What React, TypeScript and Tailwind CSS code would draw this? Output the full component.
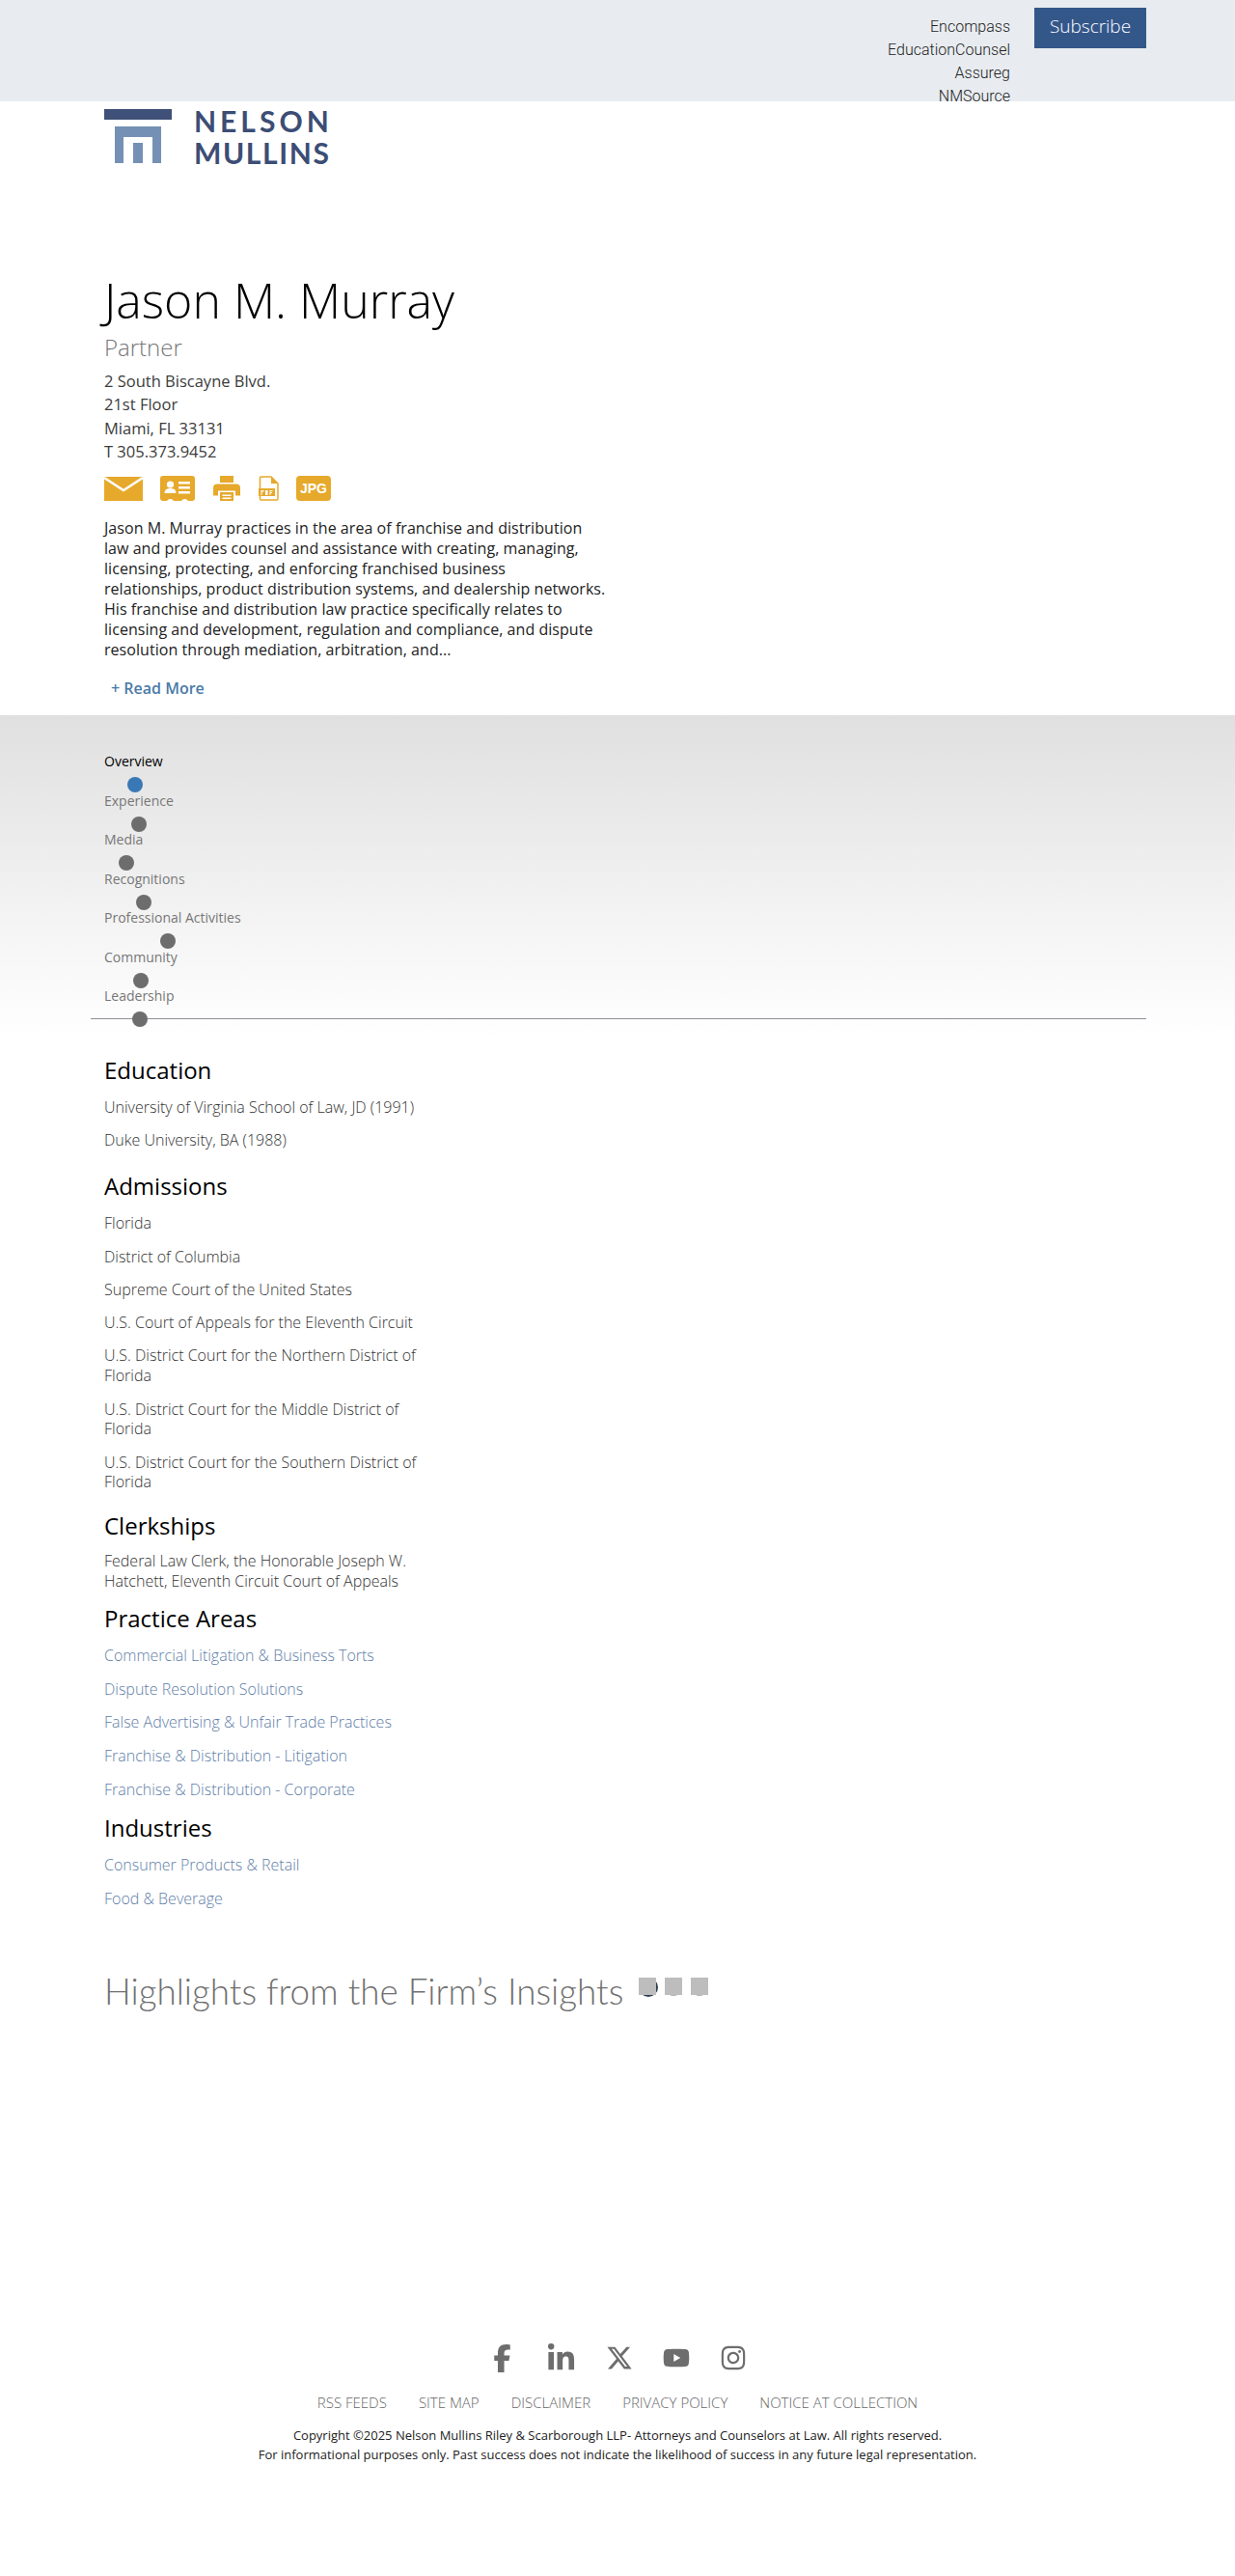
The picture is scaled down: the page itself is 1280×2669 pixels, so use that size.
import { FaFacebookF, FaInstagram, FaLinkedinIn, FaYoutube, FaXTwitter } from "react-icons/fa6";

const sans = "font-['Open_Sans',sans-serif]";

const tabs = [
  { label: "Overview", dot: 32, active: true },
  { label: "Experience", dot: 36 },
  { label: "Media", dot: 23 },
  { label: "Recognitions", dot: 41 },
  { label: "Professional Activities", dot: 66 },
  { label: "Community", dot: 38 },
  { label: "Leadership", dot: 37 },
];

const bioLines = [
  "Jason M. Murray practices in the area of franchise and distribution",
  "law and provides counsel and assistance with creating, managing,",
  "licensing, protecting, and enforcing franchised business",
  "relationships, product distribution systems, and dealership networks.",
  "His franchise and distribution law practice specifically relates to",
  "licensing and development, regulation and compliance, and dispute",
  "resolution through mediation, arbitration, and...",
];

const admissions = [
  "Florida",
  "District of Columbia",
  "Supreme Court of the United States",
  "U.S. Court of Appeals for the Eleventh Circuit",
  "U.S. District Court for the Northern District of Florida",
  "U.S. District Court for the Middle District of Florida",
  "U.S. District Court for the Southern District of Florida",
];

const practices = [
  "Commercial Litigation & Business Torts",
  "Dispute Resolution Solutions",
  "False Advertising & Unfair Trade Practices",
  "Franchise & Distribution - Litigation",
  "Franchise & Distribution - Corporate",
];

function Item({ children, link }: { children: string; link?: boolean }) {
  return (
    <p className={`text-base leading-[20.8px] font-light ${link ? "mb-[14px] text-[#5f7ea8]" : "mb-[13.5px] text-[#333333]"}`}>
      {children}
    </p>
  );
}

function Heading({ children }: { children: string }) {
  return <h2 className="mb-[14px] text-2xl leading-[29px] font-normal text-black">{children}</h2>;
}

function ActionIcons() {
  return (
    <div className="mt-[13px] flex items-center h-[26px] text-[#e6a92b]">
      <svg width="40" height="25" viewBox="0 0 40 25" className="mr-[18px]">
        <rect width="40" height="25" fill="currentColor" />
        <path d="M0 1l20 13L40 1" fill="none" stroke="#fff" strokeWidth="2.500" />
      </svg>
      <svg width="36" height="26" viewBox="0 0 36 26" className="mr-[19px]">
        <path d="M3 0h30a3 3 0 0 1 3 3v20a3 3 0 0 1-3 3h-4a4 4 0 0 0-7 0H14a4 4 0 0 0-7 0H3a3 3 0 0 1-3-3V3a3 3 0 0 1 3-3z" fill="currentColor" />
        <circle cx="10.500" cy="9" r="3.600" fill="#fff" />
        <path d="M4.500 18c0-4 3-5 6-5s6 1 6 5z" fill="#fff" />
        <path d="M19 6h12v2.500H19zM19 11h12v2.500H19zM19 16h12v2.500H19z" fill="#fff" />
      </svg>
      <svg width="28" height="26" viewBox="0 0 28 26" className="mr-[19px]">
        <path d="M7 0h14v7H7z" fill="currentColor" />
        <path d="M4 8.500h20a4 4 0 0 1 4 4v8h-5v-5H5v5H0v-8a4 4 0 0 1 4-4z" fill="currentColor" />
        <path d="M7 17h14v9H7z" fill="currentColor" />
        <path d="M9.500 19.500h9v1.500h-9zM9.500 22.500h9v1.500h-9z" fill="#fff" />
      </svg>
      <svg width="21" height="26" viewBox="0 0 21 26" className="mr-[18px]">
        <path d="M2.500 1H13l7 7v16a1 1 0 0 1-1 1H2.500a1 1 0 0 1-1-1V2a1 1 0 0 1 1-1z" fill="none" stroke="currentColor" strokeWidth="1.500" />
        <path d="M13 1v7h7z" fill="currentColor" />
        <rect x="0" y="13" width="17" height="8" fill="currentColor" />
        <path d="M2.500 15h3v1.500h-2V20h-1zM7 15h2.500v5H7zM11.500 15h3v1h-2v1h1.500v1h-1.500v2h-1z" fill="#fff" />
      </svg>
      <div className="flex h-[26px] w-[36px] items-center justify-center rounded-[4px] bg-[#e6a92b] text-[14px] font-bold leading-none text-white font-['Liberation_Sans',sans-serif]">
        JPG
      </div>
    </div>
  );
}

export default function App() {
  return (
    <div className={`${sans} relative min-h-[2669px] bg-white text-black`}>
      {/* Top bar */}
      <div className="h-[105px] overflow-hidden bg-[#e8ecf0]">
        <div className="mx-auto flex w-[1096px] justify-end">
          <ul className="mr-[25px] pt-[16px] text-right text-base leading-6 font-light text-[#222222] font-['Roboto',sans-serif]">
            <li>Encompass</li>
            <li>EducationCounsel</li>
            <li>Assureg</li>
            <li>NMSource</li>
          </ul>
          <button className="mt-2 h-[42px] w-[116px] bg-[#34578a] pb-[3px] text-[19px] font-light text-white">Subscribe</button>
        </div>
      </div>

      {/* Logo */}
      <div className="flex pl-[108px] pt-[8px]">
        <svg width="70" height="56" viewBox="0 0 70 56" className="shrink-0">
          <rect x="0" y="0" width="70" height="11" fill="#3f5178" />
          <path d="M11 18h48v38H50V29H20v27h-9z" fill="#7590b5" />
          <rect x="30" y="35" width="10" height="21" fill="#7590b5" />
        </svg>
        <div className="ml-[23px] -mt-[4px] h-[56px] font-['Lato',sans-serif] text-[30px] leading-[33px] font-bold text-[#3c4d75]">
          <div className="tracking-[4px]">NELSON</div>
          <div className="tracking-[1.6px]">MULLINS</div>
        </div>
      </div>

      {/* Bio */}
      <div className="pl-[108px] pt-[113px]">
        <h1 className="text-[50px] leading-[58px] font-light text-black">Jason M. Murray</h1>
        <div className="mt-[5px] text-2xl leading-[29px] font-light text-[#777777]">Partner</div>
        <div className="mt-[9px] text-[16.5px] leading-[24.3px] font-medium text-[#3c3c3c]">
          <div>2 South Biscayne Blvd.</div>
          <div>21st Floor</div>
          <div>Miami, FL 33131</div>
          <div>T 305.373.9452</div>
        </div>
        <ActionIcons />
        <p className="mt-[18px] whitespace-nowrap text-base leading-[21px] tracking-[0.05px] text-[#222222]">
          {bioLines.map((line) => (
            <span key={line} className="block">
              {line}
            </span>
          ))}
        </p>
        <a className="mt-[18px] ml-[7px] block text-base leading-[22px] font-semibold text-[#4a7aa8]">+ Read More</a>
      </div>

      {/* Tabs */}
      <div className="mt-[17px] h-[335px] bg-gradient-to-b from-[#e0e0e0] to-white">
        <div className="relative ml-[94px] h-[315px] w-[1094px] border-b border-[#8f8f99] pl-[14px] pt-[38px]">
          {tabs.map((t) => (
            <div key={t.label} className="relative h-[40.500px]">
              <span className={`text-sm leading-[20px] block ${t.active ? "text-black" : "text-[#777777]"}`}>{t.label}</span>
              <span
                className={`absolute top-[26px] h-[16px] w-[16px] rounded-full ${t.active ? "bg-[#3a78b5]" : "bg-[#6d6d6d]"}`}
                style={{ left: t.dot - 8 }}
              />
            </div>
          ))}
        </div>
      </div>

      {/* Details */}
      <div className="w-[448px] pl-[108px] pt-[18px]">
        <Heading>Education</Heading>
        <Item>University of Virginia School of Law, JD (1991)</Item>
        <Item>Duke University, BA (1988)</Item>
        <div className="h-[8.500px]" />
        <Heading>Admissions</Heading>
        {admissions.map((a) => (
          <Item key={a}>{a}</Item>
        ))}
        <div className="h-[6px]" />
        <h2 className="mb-[12px] text-2xl leading-[29px] font-normal text-black">Clerkships</h2>
        <Item>Federal Law Clerk, the Honorable Joseph W. Hatchett, Eleventh Circuit Court of Appeals</Item>
        <Heading>Practice Areas</Heading>
        {practices.map((p) => (
          <Item key={p} link>
            {p}
          </Item>
        ))}
        <Heading>Industries</Heading>
        <Item link>Consumer Products & Retail</Item>
        <Item link>Food & Beverage</Item>
      </div>

      {/* Insights */}
      <div className="mt-[64px] flex items-start pl-[108px]">
        <h3 className="text-[36.800px] leading-[44px] font-light text-[#707070] font-['Lato',sans-serif]">
          Highlights from the Firm’s Insights
        </h3>
        <div className="isolate ml-[16px] mt-[8px] flex gap-[9px]">
          <span className="relative h-[18px] w-[18px] bg-[#bdbdbd]">
            <span className="absolute left-0 top-0 -z-10 h-[20px] w-[20px] rounded-full bg-[#2c3e50]" />
          </span>
          <span className="relative h-[18px] w-[18px] bg-[#bdbdbd]">
            <span className="absolute left-[3px] top-[8px] -z-10 h-[11px] w-[12px] rounded-full bg-[#b0b0b0]" />
          </span>
          <span className="relative h-[18px] w-[18px] bg-[#bdbdbd]">
            <span className="absolute left-[3px] top-[8px] -z-10 h-[11px] w-[12px] rounded-full bg-[#b0b0b0]" />
          </span>
        </div>
      </div>

      {/* Footer */}
      <div className="mt-[342px] flex flex-col items-center">
        <div className="flex h-[32px] items-center gap-[31px] text-[28px] text-[#6d6d6d]">
          <FaFacebookF className="text-[29px]" />
          <FaLinkedinIn className="text-[31px]" />
          <FaXTwitter />
          <FaYoutube />
          <FaInstagram />
        </div>
        <div className="mt-[20px] flex gap-[33px] text-[15px] leading-5 font-light text-[#666666]">
          <span>RSS FEEDS</span>
          <span>SITE MAP</span>
          <span>DISCLAIMER</span>
          <span>PRIVACY POLICY</span>
          <span>NOTICE AT COLLECTION</span>
        </div>
        <div className="mt-[14px] text-center text-[13px] leading-[20px] text-[#222222]">
          <div>Copyright ©2025 Nelson Mullins Riley & Scarborough LLP- Attorneys and Counselors at Law. All rights reserved.</div>
          <div>For informational purposes only. Past success does not indicate the likelihood of success in any future legal representation.</div>
        </div>
      </div>
    </div>
  );
}
